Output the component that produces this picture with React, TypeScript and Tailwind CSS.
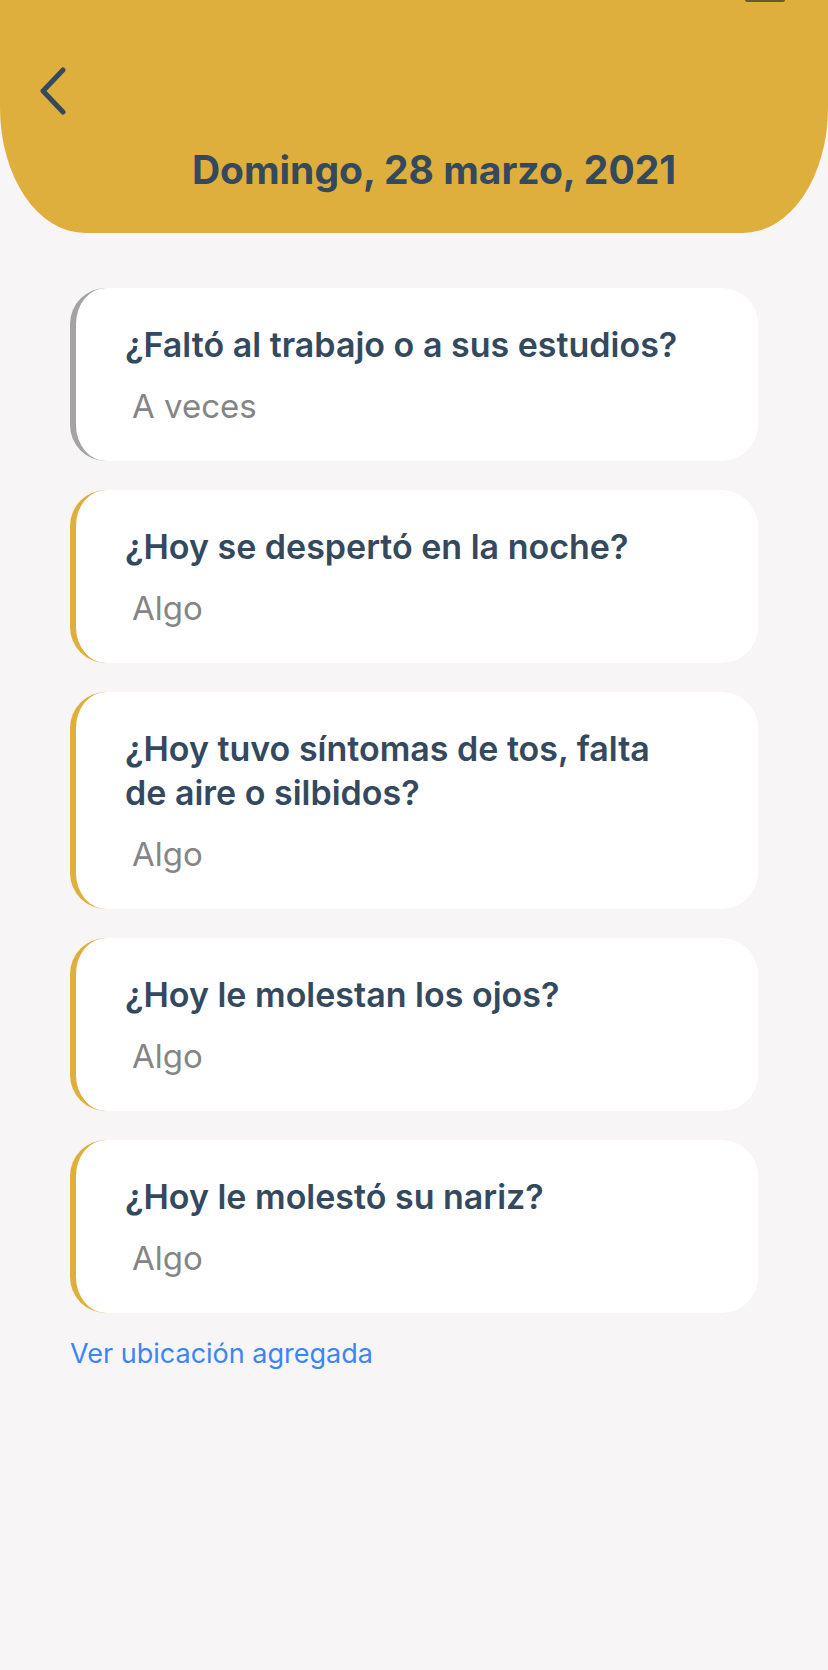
import React from "react"

interface Entry {
  question: string
  answer: string
  accent: string
}

const entries: Entry[] = [
  { question: "¿Faltó al trabajo o a sus estudios?", answer: "A veces", accent: "border-[#a3a3a3]" },
  { question: "¿Hoy se despertó en la noche?", answer: "Algo", accent: "border-[#deaf3c]" },
  { question: "¿Hoy tuvo síntomas de tos, falta de aire o silbidos?", answer: "Algo", accent: "border-[#deaf3c]" },
  { question: "¿Hoy le molestan los ojos?", answer: "Algo", accent: "border-[#deaf3c]" },
  { question: "¿Hoy le molestó su nariz?", answer: "Algo", accent: "border-[#deaf3c]" },
]

const EntryCard = ({ question, answer, accent }: Entry) => {
  return (
    <div className={`rounded-[36px] border-l-[6px] bg-white pt-[35px] pb-[35px] pl-[49px] pr-[70px] ${accent}`}>
      <p className="text-[34px] leading-[44px] font-semibold text-[#34495e]">{question}</p>
      <p className="mt-[19px] ml-[7px] text-[33px] leading-[40px] text-[#858585]">{answer}</p>
    </div>
  )
}

const App = () => {
  return (
    <div className="min-h-[1670px] w-full bg-[#f7f5f6] font-['Inter','Noto_Sans',sans-serif]">
      <header className="flex h-[233px] flex-col rounded-br-[85px_125px] rounded-bl-[85px_125px] bg-[#deaf3c]">
        <div className="flex h-[2px] justify-end pr-[43px]">
          <div className="h-[2px] w-[40px] rounded-b bg-[#6b5a2c]" />
        </div>
        <div className="mt-[65px] pl-[38px]">
          <svg width="30" height="48" viewBox="0 0 30 48" fill="none" stroke="#34495e" strokeWidth="5" strokeLinecap="round" strokeLinejoin="round">
            <polyline points="25,3 5,24 25,45" />
          </svg>
        </div>
        <h1 className="mt-[32px] pl-[40px] text-center text-[39px] leading-[46px] font-bold text-[#34495e]">
          Domingo, 28 marzo, 2021
        </h1>
      </header>

      <main className="flex flex-col px-[70px] pt-[55px]">
        <div className="flex flex-col gap-[29px]">
          {entries.map((entry) => (
            <EntryCard key={entry.question} {...entry} />
          ))}
        </div>
        <a className="mt-[23px] text-[27px] leading-[36px] text-[#3a86f4]">Ver ubicación agregada</a>
      </main>
    </div>
  )
}

export default App
